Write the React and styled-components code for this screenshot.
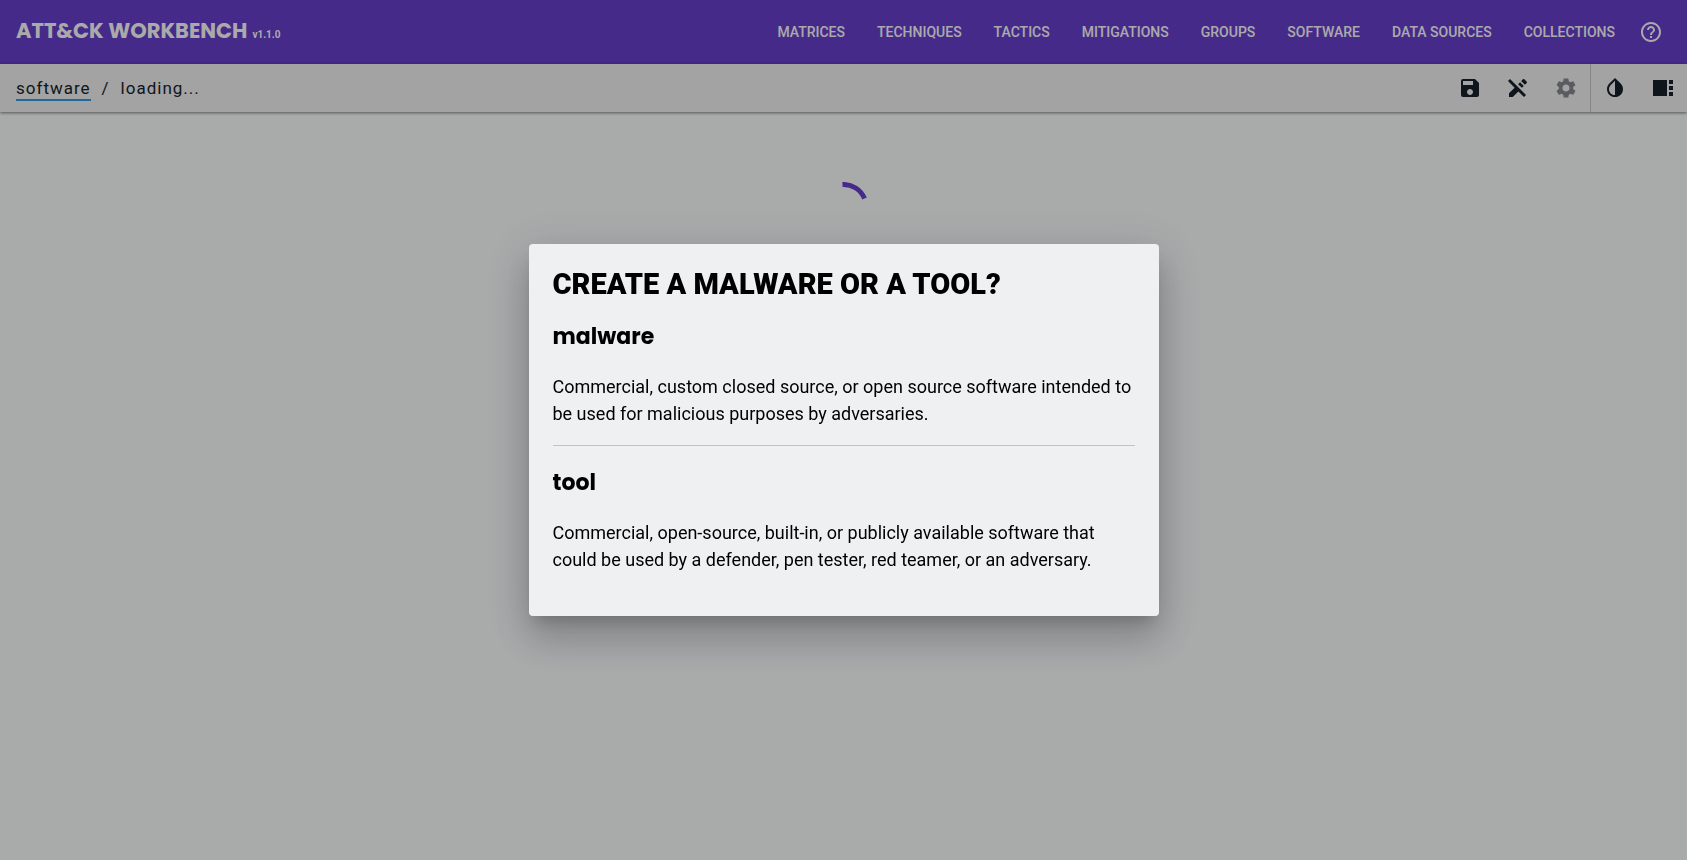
import React from "react";
import styled, { createGlobalStyle } from "styled-components";
import {
  MdHelpOutline,
  MdInvertColors,
  MdSave,
  MdSettings,
  MdViewSidebar,
} from "react-icons/md";

const GlobalStyle = createGlobalStyle`
  *, *::before, *::after { box-sizing: border-box; }
  body {
    margin: 0;
    background: #fafcfd;
    color: #161f2b;
    font-family: Roboto, "Liberation Sans", sans-serif;
    font-size: 18px;
    line-height: 27px;
  }
  button { font: inherit; color: inherit; background: none; border: 0; padding: 0; cursor: pointer; }
  a { color: inherit; text-decoration: none; }
  h1, h2, p { margin: 0; }
`;

const Page = styled.div`
  min-height: 100vh;
  display: flex;
  flex-direction: column;
`;

const Header = styled.header`
  height: 64px;
  display: flex;
  align-items: center;
  justify-content: space-between;
  padding: 0 16px;
  background: #673ecb;
  color: #fbfbfb;
`;

const Brand = styled.a`
  display: flex;
  align-items: baseline;
  gap: 5px;
  font-family: Poppins, Inter, sans-serif;
  font-size: 21px;
  font-weight: 700;
  white-space: nowrap;
`;

const Version = styled.span`
  font-family: Roboto, sans-serif;
  font-size: 10px;
  font-weight: 700;
`;

const Nav = styled.nav`
  display: flex;
  align-items: center;
`;

const NavLink = styled.a`
  padding: 0 16px;
  font-size: 14px;
  font-weight: 500;
  line-height: 36px;
  white-space: nowrap;
`;

const IconButton = styled.button`
  width: 48px;
  height: 48px;
  display: flex;
  align-items: center;
  justify-content: center;

  &:disabled { color: #85888c; }

  svg { width: 24px; height: 24px; }
`;

const HelpButton = styled(IconButton)`
  width: 40px;
`;

const Toolbar = styled.div`
  height: 48px;
  display: flex;
  align-items: center;
  justify-content: space-between;
  padding-left: 16px;
  background: #f0f0f0;
  box-shadow: 0 1px 3px rgba(0, 0, 0, 0.5);
`;

const Breadcrumbs = styled.nav`
  display: flex;
  gap: 11px;
  padding-top: 1px;
  font-size: 17px;
  letter-spacing: 1px;
  line-height: 22px;
`;

const CrumbLink = styled.a`
  border-bottom: 2px solid #2a9ee0;
`;

const Actions = styled.div`
  display: flex;
`;

const ActionGroup = styled.div`
  display: flex;

  & + & { border-left: 1px solid #c4c4c4; }
`;

const Main = styled.main`
  flex: 1;
  display: flex;
  justify-content: center;
  align-items: flex-start;
  padding-top: 70px;
`;

const Spinner = styled.svg`
  width: 50px;
  height: 50px;
`;

const Backdrop = styled.div`
  position: fixed;
  inset: 0;
  display: flex;
  align-items: center;
  justify-content: center;
  background: rgba(0, 0, 0, 0.32);
`;

const Dialog = styled.div`
  width: 630px;
  max-width: 80vw;
  padding: 24px 24px 43px;
  border-radius: 4px;
  background: #eff0f2;
  color: #000;
  box-shadow:
    0 11px 15px -7px rgba(0, 0, 0, 0.2),
    0 24px 38px 3px rgba(0, 0, 0, 0.14),
    0 9px 46px 8px rgba(0, 0, 0, 0.12);
`;

const DialogTitle = styled.h1`
  font-size: 29px;
  font-weight: 900;
  line-height: 32px;
  text-transform: uppercase;
`;

const Option = styled.button`
  display: block;
  width: 100%;
  padding: 22px 0 18px;
  text-align: left;

  & + & {
    border-top: 1px solid #c0c1c3;
    padding-bottom: 0;
  }
`;

const OptionName = styled.h2`
  margin-bottom: 21px;
  font-family: Poppins, Inter, sans-serif;
  font-size: 22px;
  font-weight: 700;
  line-height: 30px;
`;

const sections = [
  "MATRICES",
  "TECHNIQUES",
  "TACTICS",
  "MITIGATIONS",
  "GROUPS",
  "SOFTWARE",
  "DATA SOURCES",
  "COLLECTIONS",
];

const softwareTypes = [
  {
    name: "malware",
    description:
      "Commercial, custom closed source, or open source software intended to be used for malicious purposes by adversaries.",
  },
  {
    name: "tool",
    description:
      "Commercial, open-source, built-in, or publicly available software that could be used by a defender, pen tester, red teamer, or an adversary.",
  },
];

function EditOffIcon() {
  return (
    <svg viewBox="0 0 24 24" fill="currentColor" aria-hidden="true">
      <path d="M12.126 8.125l1.937-1.937 3.747 3.747-1.937 1.938z M20.71 5.63l-2.34-2.34a1 1 0 0 0-1.41 0l-1.83 1.83 3.75 3.75L20.71 7a1 1 0 0 0 0-1.37z M2 5l6.63 6.63L3 17.25V21h3.75l5.63-5.62L18 21l2-2L4 3 2 5z" />
    </svg>
  );
}

export default function App() {
  return (
    <>
      <GlobalStyle />
      <Page>
        <Header>
          <Brand href="#home">
            ATT&amp;CK WORKBENCH <Version>v1.1.0</Version>
          </Brand>
          <Nav aria-label="Sections">
            {sections.map((name) => (
              <NavLink key={name} href="#section">
                {name}
              </NavLink>
            ))}
            <HelpButton aria-label="Help">
              <MdHelpOutline />
            </HelpButton>
          </Nav>
        </Header>
        <Toolbar>
          <Breadcrumbs aria-label="Breadcrumb">
            <CrumbLink href="#software">software</CrumbLink>
            <span>/</span>
            <span>loading...</span>
          </Breadcrumbs>
          <Actions>
            <ActionGroup>
              <IconButton aria-label="Save"><MdSave /></IconButton>
              <IconButton aria-label="Stop editing"><EditOffIcon /></IconButton>
              <IconButton aria-label="Settings" disabled><MdSettings /></IconButton>
            </ActionGroup>
            <ActionGroup>
              <IconButton aria-label="Toggle theme"><MdInvertColors /></IconButton>
              <IconButton aria-label="Toggle sidebar"><MdViewSidebar /></IconButton>
            </ActionGroup>
          </Actions>
        </Toolbar>
        <Main>
          <Spinner viewBox="0 0 50 50" role="img" aria-label="Loading">
            <path
              d="M23.5 2.5 A22.5 22.5 0 0 1 45.5 16.5"
              fill="none"
              stroke="#673ecb"
              strokeWidth="5"
            />
          </Spinner>
        </Main>
      </Page>
      <Backdrop>
        <Dialog role="dialog" aria-modal="true" aria-labelledby="dialog-title">
          <DialogTitle id="dialog-title">Create a malware or a tool?</DialogTitle>
          {softwareTypes.map(({ name, description }) => (
            <Option key={name}>
              <OptionName>{name}</OptionName>
              <p>{description}</p>
            </Option>
          ))}
        </Dialog>
      </Backdrop>
    </>
  );
}
